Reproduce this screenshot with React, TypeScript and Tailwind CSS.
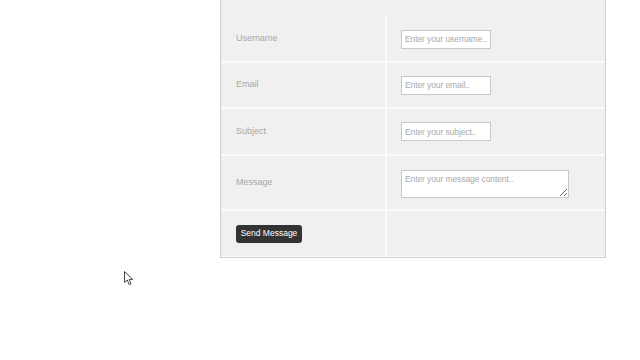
import React from 'react';

const rows = [
  { label: 'Username', placeholder: 'Enter your username..', h: 'h-[44px]' },
  { label: 'Email', placeholder: 'Enter your email..', h: 'h-[44px]' },
  { label: 'Subject', placeholder: 'Enter your subject..', h: 'h-[45px]' },
];

export default function App() {
  return (
    <div className="relative w-[640px] h-[360px] bg-white overflow-hidden" style={{ fontFamily: '"Liberation Sans", Arial, sans-serif' }}>
      {/* Form panel */}
      <div className="ml-[220px] w-[386px] border-x border-b border-[#cfcfcf] bg-[#f0f0f0]">
        <div className="h-[17px]" />
        <div className="grid grid-cols-[164px_1fr] gap-[2px] bg-[#fafafa] pb-[1px]">
          {rows.map((r) => (
            <React.Fragment key={r.label}>
              <div className={`${r.h} bg-[#f0f0f0] flex items-center pl-[15px] text-[9px] text-[#a8a8a8]`}>{r.label}</div>
              <div className={`${r.h} bg-[#f0f0f0] flex items-center pl-[14px]`}>
                <input
                  placeholder={r.placeholder}
                  className="w-[90px] h-[19px] border border-[#c8c8c8] bg-white px-[3px] text-[8.5px] tracking-[-0.1px] placeholder:text-[#aaaaaa] outline-none"
                />
              </div>
            </React.Fragment>
          ))}
          <div className="h-[53px] bg-[#f0f0f0] flex items-center pl-[15px] text-[9px] text-[#a8a8a8]">Message</div>
          <div className="h-[53px] bg-[#f0f0f0] flex items-start pt-[14px] pl-[14px]">
            <textarea
              placeholder="Enter your message content.."
              className="w-[168px] h-[28px] border border-[#c8c8c8] bg-white px-[3px] py-[2px] text-[8.5px] tracking-[-0.1px] placeholder:text-[#aaaaaa] outline-none"
            />
          </div>
          <div className="h-[45px] bg-[#f0f0f0] flex items-center pl-[15px]">
            <button className="h-[18px] w-[66px] rounded-[3px] bg-[#333333] text-white text-[8.5px]">Send Message</button>
          </div>
          <div className="h-[45px] bg-[#f0f0f0]" />
        </div>
      </div>

      {/* Mouse pointer */}
      <svg className="absolute left-[124px] top-[271px]" width="11" height="15" viewBox="0 0 11 15">
        <path d="M0.5 0.5 L0.5 11.5 L3.2 9 L5.2 13.6 L7 12.8 L5.1 8.4 L8.8 8.4 Z" fill="white" stroke="#444" strokeWidth="1" />
      </svg>
    </div>
  );
}
